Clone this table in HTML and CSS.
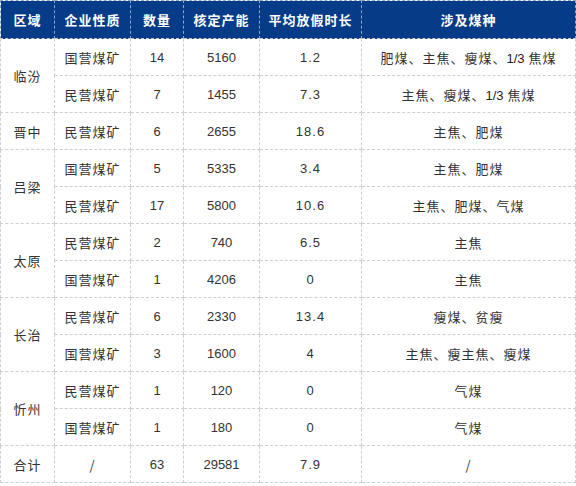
FILE: index.html
```html
<!DOCTYPE html>
<html lang="zh">
<head>
<meta charset="utf-8">
<link rel="stylesheet" href="styles.css">
</head>
<body>
<table class="tbl">
  <colgroup>
    <col class="c1"><col class="c2"><col class="c3"><col class="c4"><col class="c5"><col class="c6">
  </colgroup>
  <thead>
    <tr><th>区域</th><th>企业性质</th><th>数量</th><th>核定产能</th><th>平均放假时长</th><th>涉及煤种</th></tr>
  </thead>
  <tbody>
    <tr><td rowspan="2" class="zh">临汾</td><td class="zh">国营煤矿</td><td class="num">14</td><td class="num">5160</td><td class="num dec">1.2</td><td class="zh">肥煤、主焦、瘦煤、<span class="n">1/3</span> 焦煤</td></tr>
    <tr><td class="zh">民营煤矿</td><td class="num">7</td><td class="num">1455</td><td class="num dec">7.3</td><td class="zh">主焦、瘦煤、<span class="n">1/3</span> 焦煤</td></tr>
    <tr><td class="zh">晋中</td><td class="zh">民营煤矿</td><td class="num">6</td><td class="num">2655</td><td class="num dec">18.6</td><td class="zh">主焦、肥煤</td></tr>
    <tr><td rowspan="2" class="zh">吕梁</td><td class="zh">国营煤矿</td><td class="num">5</td><td class="num">5335</td><td class="num dec">3.4</td><td class="zh">主焦、肥煤</td></tr>
    <tr><td class="zh">民营煤矿</td><td class="num">17</td><td class="num">5800</td><td class="num dec">10.6</td><td class="zh">主焦、肥煤、气煤</td></tr>
    <tr><td rowspan="2" class="zh">太原</td><td class="zh">民营煤矿</td><td class="num">2</td><td class="num">740</td><td class="num dec">6.5</td><td class="zh">主焦</td></tr>
    <tr><td class="zh">国营煤矿</td><td class="num">1</td><td class="num">4206</td><td class="num dec">0</td><td class="zh">主焦</td></tr>
    <tr><td rowspan="2" class="zh">长治</td><td class="zh">民营煤矿</td><td class="num">6</td><td class="num">2330</td><td class="num dec">13.4</td><td class="zh">瘦煤、贫瘦</td></tr>
    <tr><td class="zh">国营煤矿</td><td class="num">3</td><td class="num">1600</td><td class="num dec">4</td><td class="zh">主焦、瘦主焦、瘦煤</td></tr>
    <tr><td rowspan="2" class="zh">忻州</td><td class="zh">民营煤矿</td><td class="num">1</td><td class="num">120</td><td class="num dec">0</td><td class="zh">气煤</td></tr>
    <tr><td class="zh">国营煤矿</td><td class="num">1</td><td class="num">180</td><td class="num dec">0</td><td class="zh">气煤</td></tr>
    <tr><td class="zh">合计</td><td class="zh">/</td><td class="num">63</td><td class="num">29581</td><td class="num dec">7.9</td><td class="zh">/</td></tr>
  </tbody>
</table>
</body>
</html>
```
FILE: styles.css
```css
html, body {
  margin: 0;
  padding: 0;
  background: #ffffff;
}
.tbl {
  width: 575px;
  border-collapse: collapse;
  table-layout: fixed;
  font-family: "Noto Sans CJK SC", "Liberation Sans", sans-serif;
}
.c1 { width: 54px; }
.c2 { width: 76px; }
.c3 { width: 53px; }
.c4 { width: 76px; }
.c5 { width: 102px; }
.c6 { width: 214px; }
.tbl th {
  height: 37px;
  padding: 0;
  background: #063b87;
  color: #ffffff;
  font-size: 13px;
  font-weight: 700;
  letter-spacing: 1px;
  text-align: center;
  border: 1px dashed #8fa6c8;
  border-bottom-color: #c8c8c8;
}
.tbl td {
  height: 36px;
  padding: 0;
  text-align: center;
  color: #333333;
  border: 1px dashed #cfcfcf;
}
.zh {
  font-size: 13px;
  letter-spacing: 1px;
  font-weight: 400;
}
.num, .n {
  font-family: "Liberation Sans", Arial, sans-serif;
  font-size: 13px;
  color: #222222;
  letter-spacing: 0;
}
.dec {
  letter-spacing: 1px;
}
```
